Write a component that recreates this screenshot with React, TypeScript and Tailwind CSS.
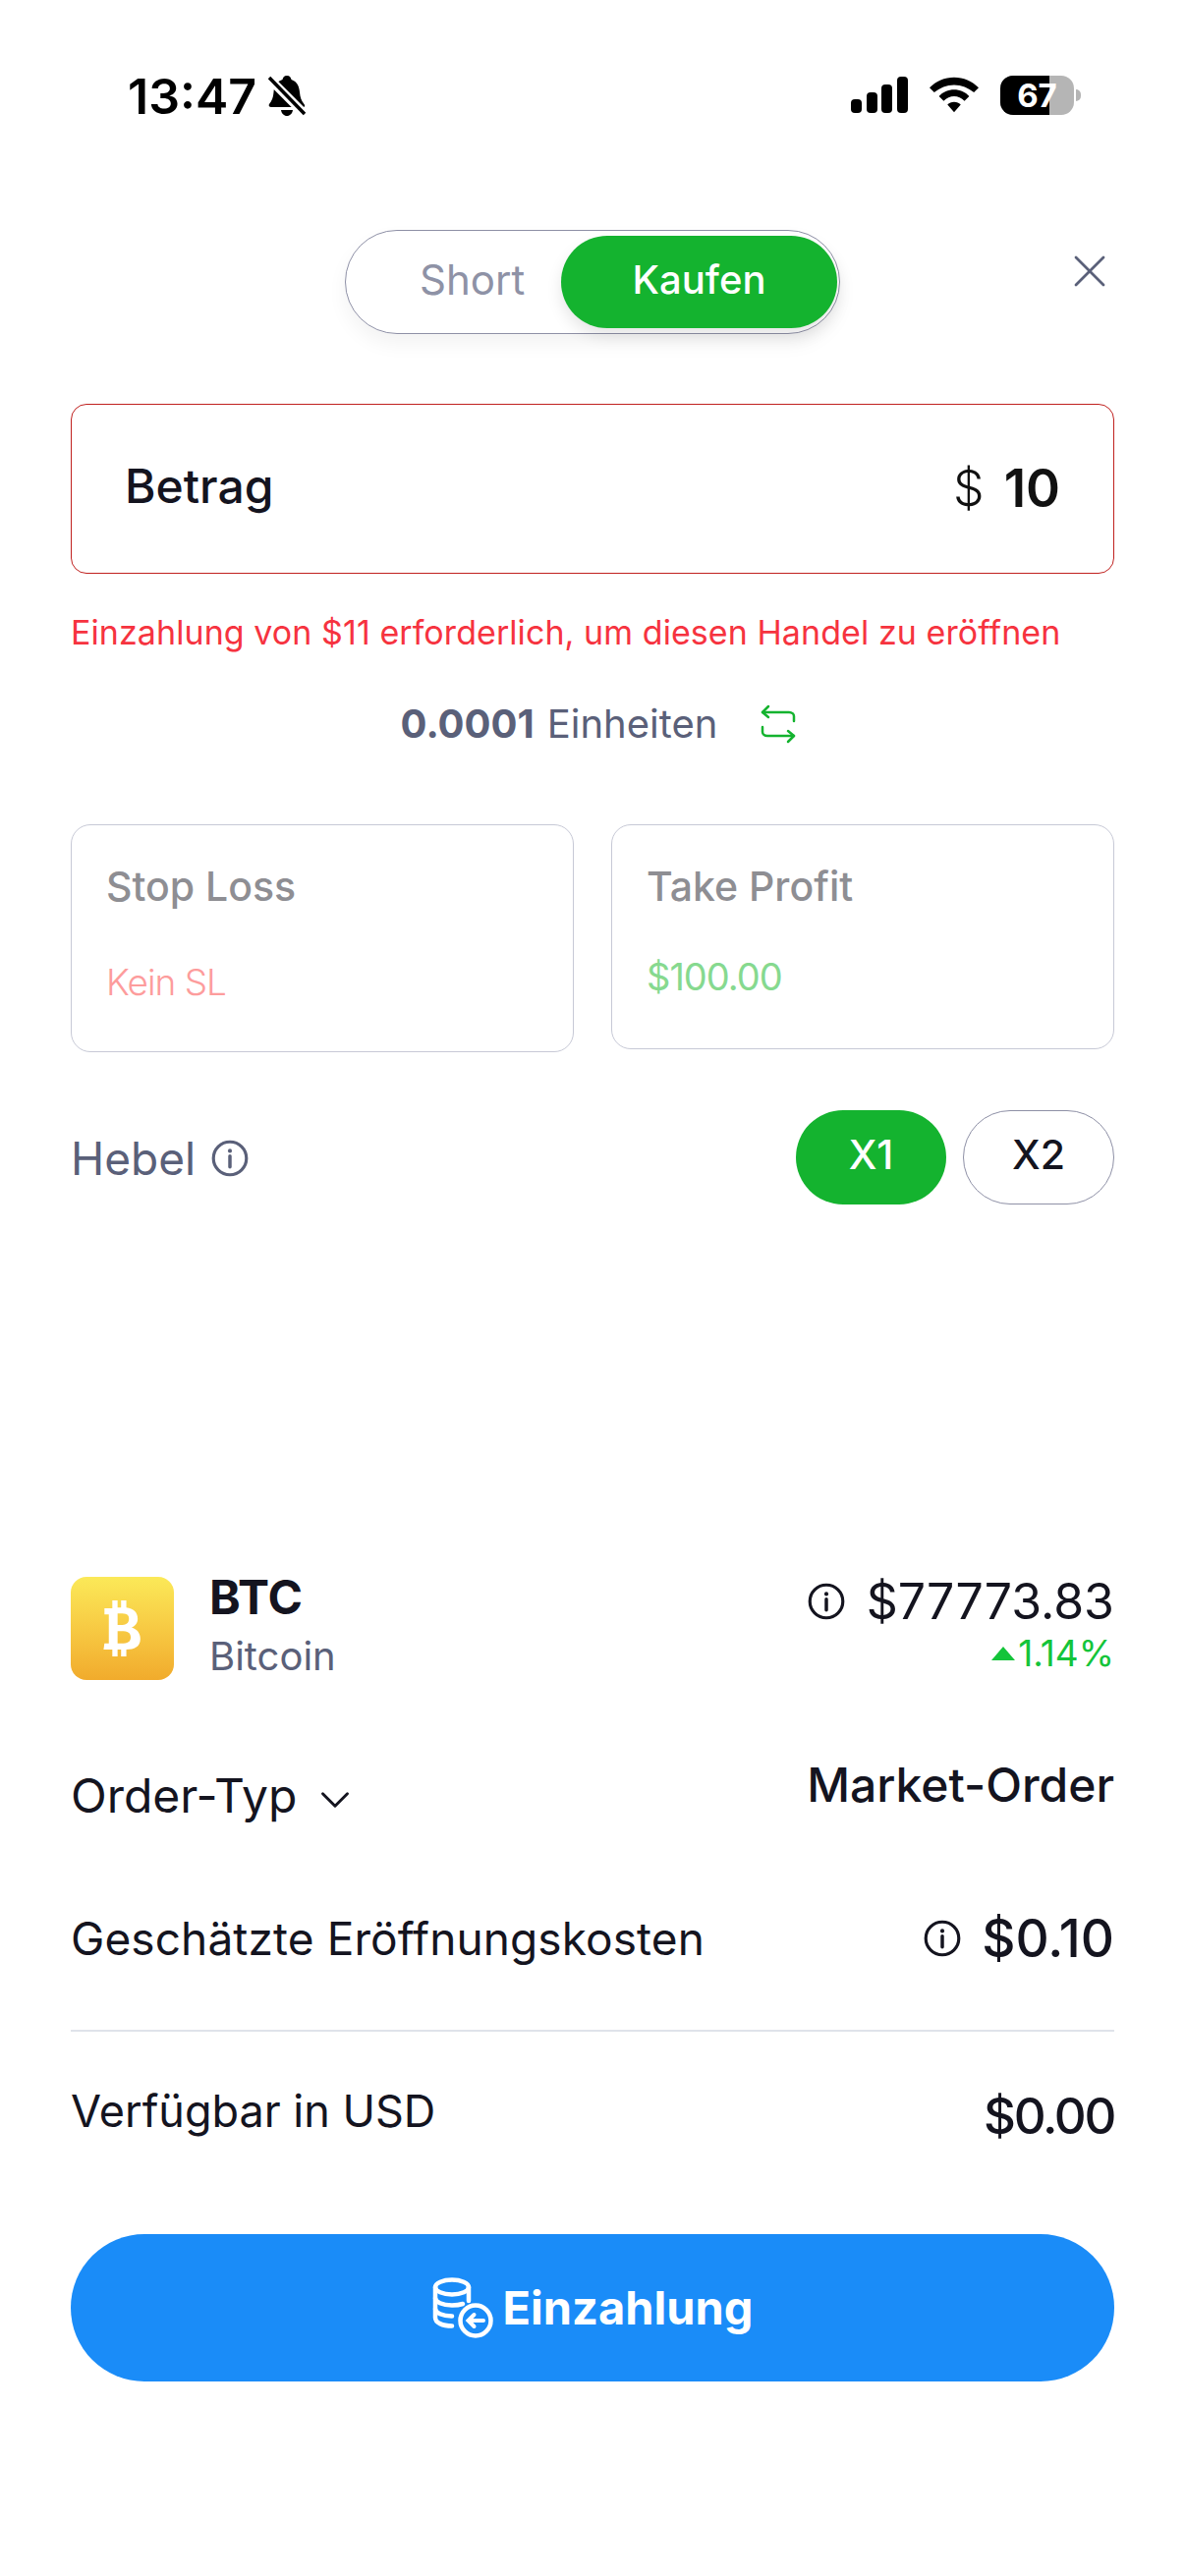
import { X, ChevronDown } from "lucide-react";

function InfoIcon({ size, color }: { size: number; color: string }) {
  return (
    <svg width={size} height={size} viewBox="0 0 24 24" fill="none" stroke={color} strokeWidth="2" className="shrink-0">
      <circle cx="12" cy="12" r="10.6" />
      <path d="M12 10.6v7" strokeLinecap="round" strokeWidth="2.200" />
      <circle cx="12" cy="7.2" r="1.3" fill={color} stroke="none" />
    </svg>
  );
}

function StatusBar() {
  return (
    <div className="flex h-[128px] items-end justify-between pl-[130px] pr-[106px]">
      <div className="flex items-center gap-[10px]">
        <span className="text-[50px] leading-[60px] font-semibold text-black">13:47</span>
        <svg width="42" height="44" viewBox="0 0 42 44" fill="black">
          <path d="M21 1c3 0 4 2 4.500 4 6 2 8 7 8.500 13 .5 5 1.500 8 4.500 12 1 1.500 1 3-1 3H5c-2 0-3-1.500-2-3 3-4 4-7 4.500-12C8 12 10 7 16.500 5 17 3 18 1 21 1z" />
          <path d="M15 36h12c-.5 3.500-3 6-6 6s-5.500-2.500-6-6z" />
          <path d="M2 3l37 37" stroke="white" strokeWidth="9" />
          <path d="M3 3l36 37" stroke="black" strokeWidth="3.500" />
        </svg>
      </div>
      <div className="flex items-center gap-[22px] pb-[11px]">
        <svg width="58" height="38" viewBox="0 0 58 38" fill="black">
          <rect x="0" y="23" width="11" height="14" rx="4" />
          <rect x="16" y="16" width="11" height="21" rx="4" />
          <rect x="31" y="8" width="11" height="29" rx="4" />
          <rect x="47" y="0" width="11" height="37" rx="4" />
        </svg>
        <svg width="50" height="38" viewBox="0 0 52 38" fill="black">
          <path d="M26 0c10 0 19 4 26 11l-5 5C41 11 34 8 26 8S11 11 5 16l-5-5C7 4 16 0 26 0z" />
          <path d="M26 13c6 0 12 2.500 16 7l-5 5c-3-3-7-5-11-5s-8 2-11 5l-5-5c4-4.500 10-7 16-7z" />
          <path d="M26 26c3 0 5 1 7 3l-7 8-7-8c2-2 4-3 7-3z" />
        </svg>
        <div className="flex items-center">
          <div className="relative h-[40px] w-[75px] overflow-hidden rounded-[13px] bg-[#b5b5b5]">
            <div className="absolute inset-y-0 left-0 w-[50px] bg-black" />
            <span className="absolute inset-0 text-center text-[33px] leading-[40px] font-bold text-white">67</span>
          </div>
          <div className="ml-[2px] h-[12px] w-[5px] rounded-r-full bg-[#b5b5b5]" />
        </div>
      </div>
    </div>
  );
}

function Toggle() {
  return (
    <div className="relative mt-[106px] flex justify-center">
      <div className="flex h-[106px] w-[504px] items-center justify-between rounded-full border border-[#8e90a6] pr-[2px] pl-[75px] shadow-[0_10px_20px_rgba(0,0,0,0.05)]">
        <span className="pb-[5px] text-[42px] text-[#8e92a6]">Short</span>
        <div className="flex h-[94px] w-[281px] items-center justify-center rounded-full bg-[#14b32f] pb-[5px] text-[40px] font-medium text-white shadow-[0_8px_16px_rgba(0,0,0,0.1)]">
          Kaufen
        </div>
      </div>
      <X className="absolute top-[14px] right-[-3px] text-[#5a6079]" size={56} strokeWidth={1.2} />
    </div>
  );
}

function StopCard({ title, value, valueClass, cardClass }: { title: string; value: string; valueClass: string; cardClass: string }) {
  return (
    <div className={`w-[512px] rounded-[20px] border border-[#c7c9d6] px-[35px] ${cardClass}`}>
      <div className="text-[41px] leading-[50px] font-medium text-[#8e8e93]">{title}</div>
      <div className={`leading-[48px] ${valueClass}`}>{value}</div>
    </div>
  );
}

function CoinsIcon() {
  return (
    <svg width="62" height="62" viewBox="0 0 62 62" fill="none" stroke="white" strokeWidth="4.500" strokeLinecap="round" className="shrink-0">
      <ellipse cx="20" cy="10" rx="17" ry="7.500" />
      <path d="M3 10v31c0 5 7 8.500 17 8.500" />
      <path d="M37 10v14" />
      <path d="M3 21c0 4 7 7.500 17 7.500 4 0 8-.5 11-1.500" />
      <path d="M3 32c0 4 7 7.500 17 7.500" />
      <circle cx="44" cy="44" r="15.500" />
      <path d="M52 44H37M42.500 38l-6 6 6 6" strokeWidth="4" />
    </svg>
  );
}

export default function App() {
  return (
    <div className="h-[2622px] w-[1206px] overflow-hidden bg-white font-['Inter',sans-serif]">
      <StatusBar />
      <div className="px-[72px]">
        <Toggle />

        <div className="mt-[71px] flex h-[173px] items-center justify-between rounded-[16px] border border-[#c0211f] px-[54px]">
          <span className="pb-[5px] text-[48px] font-medium text-[#14141f]">Betrag</span>
          <div className="flex items-center gap-[20px] text-[#111]">
            <span className="text-[50px] font-light">$</span>
            <span className="text-[53px] font-semibold">10</span>
          </div>
        </div>

        <p className="mt-[38px] text-[34px] leading-[44px] tracking-[0.07px] text-[#f6333f]">Einzahlung von $11 erforderlich, um diesen Handel zu eröffnen</p>

        <div className="mt-[46px] flex items-center justify-center gap-[44px] pl-[12px]">
          <div className="flex gap-[13px] text-[40px] leading-[50px] text-[#5a6079]">
            <span className="font-bold">0.0001</span>
            <span>Einheiten</span>
          </div>
          <svg width="36" height="40" viewBox="0 0 36 40" fill="none" stroke="#14b32f" strokeWidth="2.500" strokeLinecap="round" strokeLinejoin="round">
            <path d="M8 2L2 8l6 5" />
            <path d="M2 8h27c3 0 5 2 5 4v5" />
            <path d="M28 38l6-6-6-5" />
            <path d="M34 32H7c-3 0-5-2-5-4v-5" />
          </svg>
        </div>

        <div className="mt-[77px] flex items-start justify-between">
          <StopCard title="Stop Loss" value="Kein SL" valueClass="mt-[49px] text-[37px] tracking-[-1px] text-[#fd9c9c] font-light" cardClass="h-[232px] pt-[37px]" />
          <StopCard title="Take Profit" value="$100.00" valueClass="mt-[43px] text-[38px] tracking-[-1px] text-[#86d98f]" cardClass="h-[229px] pt-[37px]" />
        </div>

        <div className="mt-[59px] flex items-center justify-between">
          <div className="flex items-center gap-[16px] pt-[2px] text-[#5a6079]">
            <span className="text-[46px]">Hebel</span>
            <InfoIcon size={38} color="#5a6079" />
          </div>
          <div className="flex gap-[17px]">
            <div className="flex h-[96px] w-[153px] items-center justify-center rounded-full bg-[#14b32f] pb-[4px] text-[41px] font-medium text-white">X1</div>
            <div className="flex h-[96px] w-[154px] items-center justify-center rounded-full border border-[#8e90a6] pb-[4px] text-[41px] font-medium text-[#14141f]">X2</div>
          </div>
        </div>

        <div className="mt-[379px] flex items-start justify-between">
          <div className="flex items-start gap-[36px]">
            <div className="flex h-[105px] w-[105px] items-center justify-center rounded-[16px] bg-gradient-to-b from-[#fbe958] to-[#f1ab2c]">
              <svg width="40" height="57" viewBox="0 0 44 64" fill="white">
                <path d="M10 0h6v8h4V0h6v8c8 1 13 5 13 13 0 5-3 8-7 10 6 2 10 6 10 13 0 9-7 12-16 12v8h-6v-8h-4v8h-6v-8H0l1-7h5V16H1V9h9V0zm6 15v13h3c7 0 10-2 10-7s-3-6-10-6h-3zm0 20v14h4c8 0 11-2 11-7s-3-7-11-7h-4z" />
              </svg>
            </div>
            <div className="-mt-[7px]">
              <div className="text-[48px] leading-[56px] font-bold text-[#14141f]">BTC</div>
              <div className="mt-[7px] text-[40px] leading-[50px] text-[#5a6079]">Bitcoin</div>
            </div>
          </div>
          <div className="-mt-[5px] flex flex-col items-end">
            <div className="flex items-center gap-[22px]">
              <InfoIcon size={38} color="#14141f" />
              <span className="text-[50px] leading-[60px] text-[#14141f]">$77773.83</span>
            </div>
            <div className="mt-[3px] flex items-center gap-[3px] text-[37px] leading-[40px] text-[#14c43a]">
              <svg width="24" height="14" viewBox="0 0 24 14" fill="#14c43a"><path d="M12 0l12 14H0z" /></svg>
              1.14%
            </div>
          </div>
        </div>

        <div className="mt-[78px] flex items-start justify-between">
          <div className="mt-[9px] flex items-center gap-[14px] text-[#14141f]">
            <span className="text-[48px] leading-[56px]">Order-Typ</span>
            <ChevronDown size={50} strokeWidth={1.4} className="mt-[9px]" />
          </div>
          <span className="text-[48px] leading-[56px] font-medium text-[#14141f]">Market-Order</span>
        </div>

        <div className="mt-[86px] flex items-center justify-between">
          <span className="text-[46px] leading-[56px] tracking-[0.1px] text-[#14141f]">Geschätzte Eröffnungskosten</span>
          <div className="flex items-center gap-[21px]">
            <InfoIcon size={38} color="#14141f" />
            <span className="text-[53px] leading-[60px] font-medium text-[#14141f]">$0.10</span>
          </div>
        </div>

        <div className="mt-[63px] h-[2px] bg-[#dfe3ea]" />

        <div className="mt-[53px] flex items-start justify-between">
          <span className="text-[45px] leading-[56px] text-[#14141f]">Verfügbar in USD</span>
          <span className="mt-[3px] text-[51px] leading-[60px] font-medium tracking-[-2.3px] text-[#14141f]">$0.00</span>
        </div>

        <div className="mt-[90px] flex h-[150px] items-center justify-center gap-[10px] rounded-full bg-[#1a8cf8] text-[47px] font-bold text-white">
          <CoinsIcon />
          Einzahlung
        </div>
      </div>
    </div>
  );
}
